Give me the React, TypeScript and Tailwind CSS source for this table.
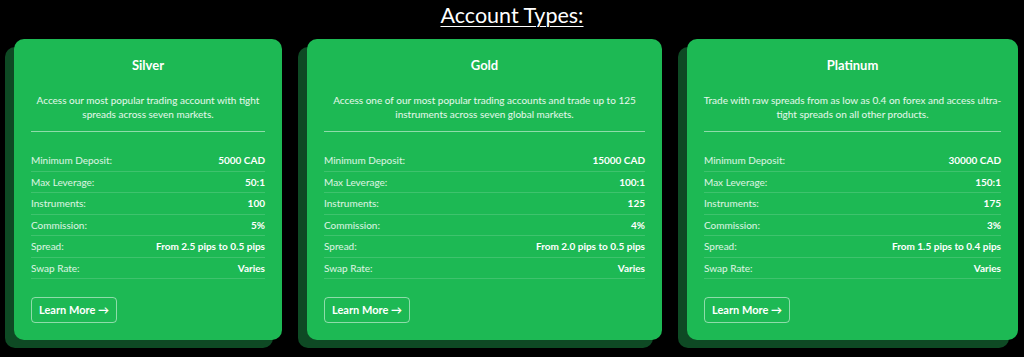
type Account = {
  name: string;
  description: string;
  width: string;
  deposit: string;
  leverage: string;
  instruments: string;
  commission: string;
  spread: string;
};

const accounts: Account[] = [
  {
    name: "Silver",
    description:
      "Access our most popular trading account with tight spreads across seven markets.",
    width: "w-[268px]",
    deposit: "5000 CAD",
    leverage: "50:1",
    instruments: "100",
    commission: "5%",
    spread: "From 2.5 pips to 0.5 pips",
  },
  {
    name: "Gold",
    description:
      "Access one of our most popular trading accounts and trade up to 125 instruments across seven global markets.",
    width: "w-[355px]",
    deposit: "15000 CAD",
    leverage: "100:1",
    instruments: "125",
    commission: "4%",
    spread: "From 2.0 pips to 0.5 pips",
  },
  {
    name: "Platinum",
    description:
      "Trade with raw spreads from as low as 0.4 on forex and access ultra-tight spreads on all other products.",
    width: "w-[331px]",
    deposit: "30000 CAD",
    leverage: "150:1",
    instruments: "175",
    commission: "3%",
    spread: "From 1.5 pips to 0.4 pips",
  },
];

const AccountCard = ({ account }: { account: Account }) => {
  const rows: [string, string][] = [
    ["Minimum Deposit:", account.deposit],
    ["Max Leverage:", account.leverage],
    ["Instruments:", account.instruments],
    ["Commission:", account.commission],
    ["Spread:", account.spread],
    ["Swap Rate:", "Varies"],
  ];
  return (
    <div
      className={`${account.width} shrink-0 rounded-[10px] bg-[#1db954] px-[17px] pt-[18px] pb-[17px] text-white shadow-[-9px_8px_0_#0e4a24]`}
    >
      <h3 className="text-center text-[13px] font-bold leading-4">
        {account.name}
      </h3>
      <p className="-mx-[4px] mt-5 text-center text-[10px] leading-[14px] text-white/90">
        {account.description}
      </p>
      <div className="mt-[10px] border-t border-white/50" />
      <ul className="mt-[18px]">
        {rows.map(([label, value]) => (
          <li
            key={label}
            className="flex h-[21.5px] items-center justify-between border-b border-white/15 pt-[1px] text-[10px]"
          >
            <span className="text-white/85">{label}</span>
            <span className="font-bold">{value}</span>
          </li>
        ))}
      </ul>
      <button
        type="button"
        className="mt-[18px] flex h-[26px] w-[86px] items-center justify-center rounded-[4px] border border-white/50 text-[11px] font-bold text-white"
      >
        Learn More →
      </button>
    </div>
  );
};

export default function App() {
  return (
    <div
      className="min-h-[357px] bg-black"
      style={{ fontFamily: 'Lato, "Open Sans", sans-serif' }}
    >
      <h2 className="pt-[1px] text-center text-[21.5px] leading-[28px] text-white">
        <span className="underline decoration-1 underline-offset-[3px]">
          Account Types:
        </span>
      </h2>
      <div className="mt-[10px] flex items-start gap-[25px] pl-[14px]">
        {accounts.map((account) => (
          <AccountCard key={account.name} account={account} />
        ))}
      </div>
    </div>
  );
}
